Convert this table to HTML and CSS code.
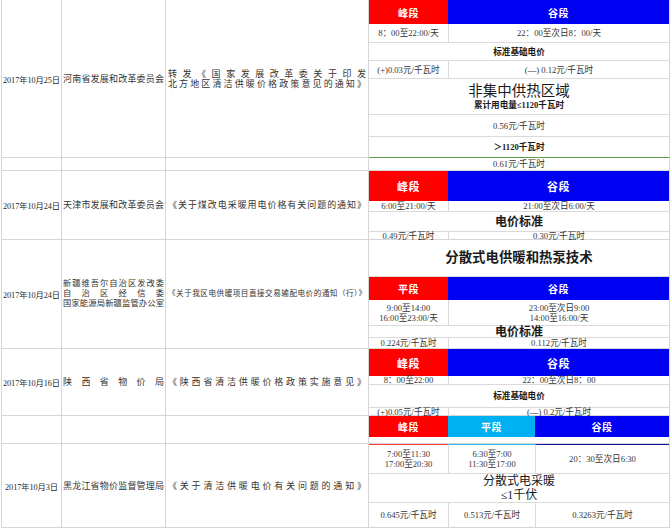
FILE: index.html
```html
<!DOCTYPE html>
<html lang="zh-CN">
<head>
<meta charset="utf-8">
<title>清洁供暖电价政策</title>
<link rel="stylesheet" href="styles.css">
</head>
<body>
<div class="sheet">
  <!-- Row 1 Henan -->
  <div class="cell date">2017年10月25日</div>
  <div class="cell org"><div class="dist">河南省发展和改革委员会</div></div>
  <div class="cell doc"><div class="dist">转发《国家发展改革委关于印发<br>北方地区清洁供暖价格政策意见的通知》</div></div>
  <div class="cell rate rate-green">
    <div class="sub two r1">
      <div class="hd red">峰段</div><div class="hd blue">谷段</div>
      <div class="c">8：00至22:00/天</div><div class="c l">22：00至次日8：00/天</div>
      <div class="c span b">标准基础电价</div>
      <div class="c">(+)0.03元/千瓦时</div><div class="c l">(—) 0.12元/千瓦时</div>
      <div class="c span stack"><span class="big">非集中供热区域</span><span class="b">累计用电量≤1120千瓦时</span></div>
      <div class="c span">0.56元/千瓦时</div>
      <div class="c span b last">＞1120千瓦时</div>
    </div>
  </div>

  <!-- Spacer 1 -->
  <div class="cell"></div><div class="cell"></div><div class="cell"></div>
  <div class="cell rate"><div class="c one">0.61元/千瓦时</div></div>

  <!-- Row 2 Tianjin -->
  <div class="cell date">2017年10月24日</div>
  <div class="cell org"><div class="dist">天津市发展和改革委员会</div></div>
  <div class="cell doc"><div class="dist">《关于煤改电采暖用电价格有关问题的通知》</div></div>
  <div class="cell rate">
    <div class="sub two r2">
      <div class="hd red hd11">峰段</div><div class="hd blue hd11">谷段</div>
      <div class="c">6:00至21:00/天</div><div class="c l">21:00至次日6:00/天</div>
      <div class="c span mid">电价标准</div>
      <div class="c last">0.49元/千瓦时</div><div class="c l last">0.30元/千瓦时</div>
    </div>
  </div>

  <!-- Row 3 Xinjiang -->
  <div class="cell date">2017年10月24日</div>
  <div class="cell org">
    <div class="lines">
      <div class="dist tight">新疆维吾尔自治区发改委</div>
      <div class="dist tight">自治区经信委</div>
      <div class="dist tight">国家能源局新疆监管办公室</div>
    </div>
  </div>
  <div class="cell doc"><div class="dist small">《关于我区电供暖项目直接交易输配电价的通知（行）》</div></div>
  <div class="cell rate">
    <div class="sub two r3">
      <div class="c span title">分散式电供暖和热泵技术</div>
      <div class="hd red">平段</div><div class="hd blue">谷段</div>
      <div class="c stack2">9:00至14:00<br>16:00至23:00/天</div><div class="c l stack2">23:00至次日9:00<br>14:00至16:00/天</div>
      <div class="c span mid">电价标准</div>
      <div class="c last">0.224元/千瓦时</div><div class="c l last">0.112元/千瓦时</div>
    </div>
  </div>

  <!-- Row 4 Shaanxi -->
  <div class="cell date">2017年10月16日</div>
  <div class="cell org"><div class="dist">陕西省物价局</div></div>
  <div class="cell doc"><div class="dist">《陕西省清洁供暖价格政策实施意见》</div></div>
  <div class="cell rate">
    <div class="sub two r4">
      <div class="hd red hd11">峰段</div><div class="hd blue hd11">谷段</div>
      <div class="c">8：00至22:00</div><div class="c l">22：00至次日8：00</div>
      <div class="c span b">标准基础电价</div>
      <div class="c last">(+)0.05元/千瓦时</div><div class="c l last">(—) 0.2元/千瓦时</div>
    </div>
  </div>

  <!-- Spacer 2 -->
  <div class="cell"></div><div class="cell"></div><div class="cell"></div>
  <div class="cell rate">
    <div class="sub three r5h">
      <div class="hd red">峰段</div><div class="hd cyan">平段</div><div class="hd blue">谷段</div>
    </div>
  </div>

  <!-- Row 5 Heilongjiang -->
  <div class="cell date">2017年10月3日</div>
  <div class="cell org"><div class="dist">黑龙江省物价监督管理局</div></div>
  <div class="cell doc"><div class="dist">《关于清洁供暖电价有关问题的通知》</div></div>
  <div class="cell rate">
    <div class="sub three r5">
      <div class="c stack2 top-red">7:00至11:30<br>17:00至20:30</div>
      <div class="c l stack2 top-cyan">6:30至7:00<br>11:30至17:00</div>
      <div class="c l top-navy">20：30至次日6:30</div>
      <div class="c span3 mid2">分散式电采暖<br>≤1千伏</div>
      <div class="c last">0.645元/千瓦时</div><div class="c l last">0.513元/千瓦时</div><div class="c l last">0.3263元/千瓦时</div>
    </div>
  </div>
</div>
</body>
</html>
```

FILE: styles.css
```css
* { box-sizing: border-box; }

html, body {
  margin: 0;
  padding: 0;
  background: #ffffff;
}

body {
  font-family: "Liberation Serif", "Noto Sans CJK SC", serif;
  font-size: 9px;
  color: #2a2a2a;
  width: 670px;
  height: 530px;
  overflow: hidden;
}

.sheet {
  display: grid;
  grid-template-columns: 60px 104px 203px 301px;
  grid-template-rows: 158px 13px 69px 109px 67px 28px 84px;
  margin-left: 1px;
  width: 669px;
  border-left: 1px solid #d6d6d6;
}

.cell {
  border-right: 1px solid #d6d6d6;
  border-bottom: 1px solid #d6d6d6;
  display: flex;
  align-items: center;
  min-width: 0;
  overflow: visible;
}

.date {
  justify-content: center;
  font-size: 8.3px;
  letter-spacing: -0.1px;
  white-space: nowrap;
}

.org { padding: 0 1px; }
.doc { padding: 0 2px; }

.lines {
  width: 100%;
  display: flex;
  flex-direction: column;
}

.dist {
  width: 100%;
  text-align: justify;
  text-align-last: justify;
  text-justify: inter-character;
  line-height: 10px;
  font-size: 9px;
  color: #333333;
}

.dist.tight {
  font-size: 8.3px;
  white-space: nowrap;
}

.dist.small {
  font-size: 7.6px;
}

.rate {
  display: block;
  padding: 0;
}

.rate-green {
  border-bottom: 1px solid #5e9d45;
}

.sub {
  display: grid;
  width: 100%;
}

.two { grid-template-columns: 79px 1fr; }
.three { grid-template-columns: 79px 87px 1fr; }

.r1 { grid-template-rows: 24px 19px 18px 18px 36px 22px 20px; }
.r2 { grid-template-rows: 30px 11px 20px 7px; }
.r3 { grid-template-rows: 37px 23px 26px 12px 10px; }
.r4 { grid-template-rows: 27px 9px 23px 7px; }
.r5h { grid-template-rows: 21px; }
.r5 { grid-template-rows: 30px 29px 24px; }

.hd {
  display: flex;
  align-items: center;
  justify-content: center;
  color: #ffffff;
  font-weight: bold;
  font-size: 10px;
  letter-spacing: 0.5px;
}

.hd11 { font-size: 11px; }

.red { background: #ff0000; }
.blue { background: #0000f2; }
.cyan { background: #00b0f0; }

.c {
  display: flex;
  align-items: center;
  justify-content: center;
  text-align: center;
  border-bottom: 1px solid #dadada;
  white-space: nowrap;
  line-height: 10px;
  font-size: 8.6px;
  color: #333333;
}

.c.l { border-left: 1px solid #dadada; }
.c.last { border-bottom: none; }

.span { grid-column: 1 / -1; }
.span3 { grid-column: 1 / -1; }

.b { font-weight: bold; font-size: 8.6px; color: #1a1a1a; }

.stack {
  flex-direction: column;
  gap: 1px;
}

.big {
  font-size: 14.5px;
  line-height: 16px;
  color: #1a1a1a;
}

.mid {
  font-size: 12px;
  font-weight: bold;
  color: #1a1a1a;
}

.title {
  font-size: 13.4px;
  font-weight: bold;
  color: #1a1a1a;
}

.mid2 {
  font-size: 12px;
  line-height: 14px;
  color: #1a1a1a;
}

.stack2 { line-height: 10px; }

.one {
  height: 12px;
  border-bottom: none;
}

.top-red { border-top: 1px solid #ff3a2a; }
.top-cyan { border-top: 1px solid #22b8ee; }
.top-navy { border-top: 1px solid #1010a0; }
```
